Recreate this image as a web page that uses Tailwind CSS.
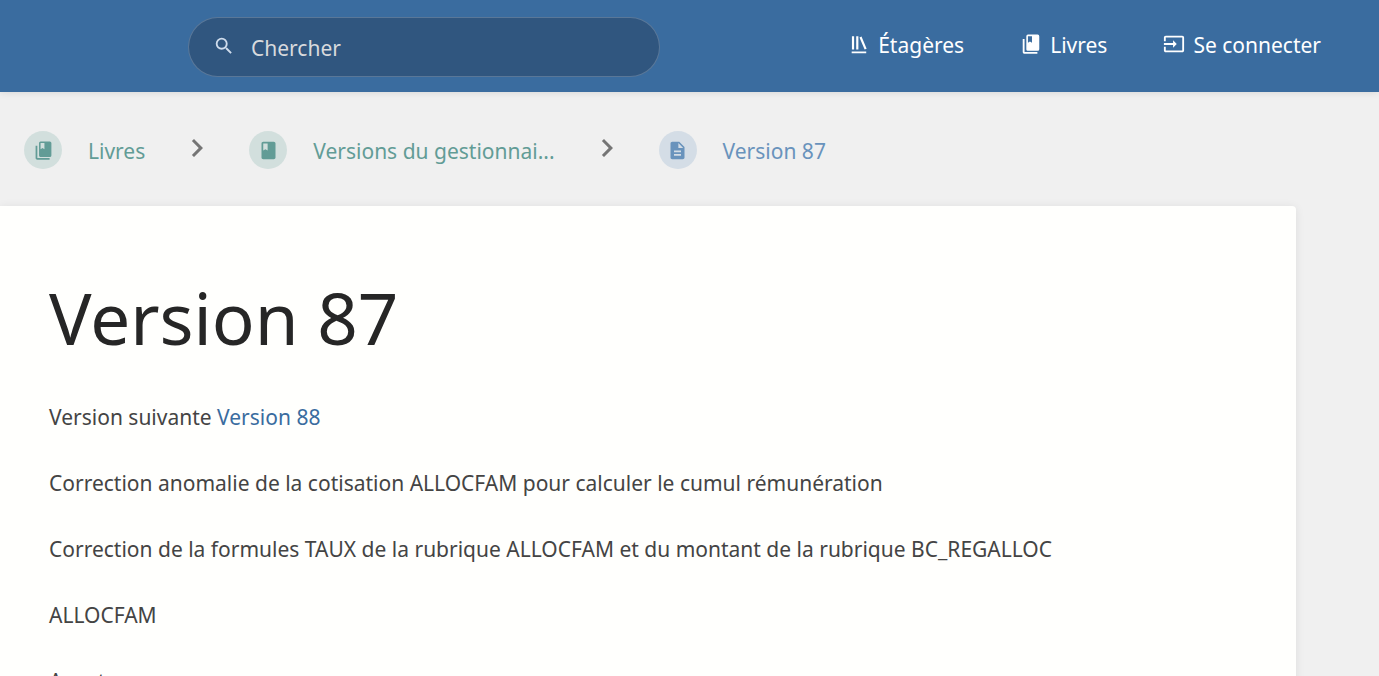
<!doctype html>
<html lang="fr">
<head>
    <meta charset="UTF-8">
    <meta name="viewport" content="width=device-width, initial-scale=1.0">
    <title>Version 87</title>
    <script src="https://cdn.jsdelivr.net/npm/@tailwindcss/browser@4"></script>
</head>

<body class="min-h-screen overflow-hidden bg-[#f0f0f0] font-['Segoe_UI','Noto_Sans',sans-serif] text-[21px] leading-8 text-[#444]">
    <header class="relative flex h-23 items-center justify-between bg-[#3a6c9f] pl-47 pr-[58px] text-white shadow-[0_0_8px_rgba(0,0,0,0.12)]">
        <form class="flex h-15 w-118 items-center gap-4 rounded-full border border-white/20 bg-[#30567f] pl-6 pr-8 mt-px">
            <button type="submit" aria-label="Chercher" class="mb-0.5 text-[#cfdcec]">
                <svg class="size-[22px]" viewBox="0 0 24 24" fill="currentColor"><path d="M15.5 14h-.79l-.28-.27A6.471 6.471 0 0 0 16 9.5 6.5 6.5 0 1 0 9.5 16c1.61 0 3.09-.59 4.23-1.57l.27.28v.79l5 4.99L20.49 19l-4.99-5zm-6 0C7.01 14 5 11.99 5 9.5S7.01 5 9.5 5 14 7.01 14 9.5 11.99 14 9.5 14z"/></svg>
            </button>
            <input type="text" name="term" aria-label="Chercher" placeholder="Chercher" class="min-w-0 flex-1 pt-0.5 outline-none placeholder:text-[#d8dadd]">
        </form>

        <nav class="flex items-center gap-14 pb-0.5">
            <a href="#" class="flex items-center gap-2">
                <svg class="mb-0.5 size-[22px]" viewBox="0 0 24 24" fill="currentColor"><path d="M4 20.058h15.892V22H4zM6.658 3.643V18h-2.38V3.643zM11.326 3.643V18H8.947V3.643zM14.722 3.856l5.613 13.214-2.19.93-5.613-13.214z"/></svg>
                <span>Étagères</span>
            </a>
            <a href="#" class="flex items-center gap-2">
                <svg class="mb-0.5 size-[22px]" viewBox="0 0 24 24" fill="currentColor"><path d="M19.252 1.708H8.663a1.77 1.77 0 0 0-1.765 1.764v14.12c0 .97.794 1.764 1.765 1.764h10.59a1.77 1.77 0 0 0 1.764-1.765V3.473a1.77 1.77 0 0 0-1.765-1.765zM8.663 3.473h4.412v7.06l-2.206-1.324-2.206 1.324z"/><path d="M2.966 6.61v14c0 1.1.9 2 2 2h14v-2h-14v-14z"/></svg>
                <span>Livres</span>
            </a>
            <a href="#" class="flex items-center gap-2">
                <svg class="mb-0.5 size-[22px]" viewBox="0 0 24 24" fill="currentColor"><path d="M21 3.01H3c-1.1 0-2 .9-2 2V9h2V4.99h18v14.03H3V15H1v4.01c0 1.1.9 1.98 2 1.98h18c1.1 0 2-.88 2-1.98v-14c0-1.11-.9-2-2-2zM11 16l4-4-4-4v3H1v2h10v3z"/></svg>
                <span>Se connecter</span>
            </a>
        </nav>
    </header>

    <nav aria-label="Fil d'Ariane" class="flex h-[114px] items-center gap-[34px] px-6 pt-0.5">
        <a href="#" class="flex items-center gap-[26px] text-[#629c96]">
            <span class="flex size-[38px] items-center justify-center rounded-full bg-[#d2dfdd]">
                <svg class="size-[21px]" viewBox="0 0 24 24" fill="currentColor"><path d="M19.252 1.708H8.663a1.77 1.77 0 0 0-1.765 1.764v14.12c0 .97.794 1.764 1.765 1.764h10.59a1.77 1.77 0 0 0 1.764-1.765V3.473a1.77 1.77 0 0 0-1.765-1.765zM8.663 3.473h4.412v7.06l-2.206-1.324-2.206 1.324z"/><path d="M2.966 6.61v14c0 1.1.9 2 2 2h14v-2h-14v-14z"/></svg>
            </span>
            <span class="pt-0.5">Livres</span>
        </a>
        <svg class="mb-1 size-9 text-[#757575]" viewBox="0 0 24 24" fill="currentColor"><path d="M10 6L8.59 7.41 13.17 12l-4.58 4.59L10 18l6-6z"/></svg>
        <a href="#" class="flex items-center gap-[26px] text-[#629c96]">
            <span class="flex size-[38px] items-center justify-center rounded-full bg-[#d2dfdd]">
                <svg class="size-[21px]" viewBox="0 0 24 24" fill="currentColor"><path d="M18 2H6c-1.1 0-2 .9-2 2v16c0 1.1.9 2 2 2h12c1.1 0 2-.9 2-2V4c0-1.1-.9-2-2-2zM6 4h5v8l-2.5-1.5L6 12V4z"/></svg>
            </span>
            <span class="pt-0.5">Versions du gestionnai...</span>
        </a>
        <svg class="mb-1 size-9 text-[#757575]" viewBox="0 0 24 24" fill="currentColor"><path d="M10 6L8.59 7.41 13.17 12l-4.58 4.59L10 18l6-6z"/></svg>
        <a href="#" class="flex items-center gap-[26px] text-[#6993bc]">
            <span class="flex size-[38px] items-center justify-center rounded-full bg-[#d4dde6]">
                <svg class="size-[21px]" viewBox="0 0 24 24" fill="currentColor"><path d="M14 2H6c-1.1 0-1.99.9-1.99 2L4 20c0 1.1.89 2 1.99 2H18c1.1 0 2-.9 2-2V8l-6-6zm2 16H8v-2h8v2zm0-4H8v-2h8v2zm-3-5V3.5L18.5 9H13z"/></svg>
            </span>
            <span class="pt-0.5">Version 87</span>
        </a>
    </nav>

    <main class="mr-[83px] rounded-tr bg-[#fffffd] px-[49px] pt-16 pb-16 shadow-[0_1px_10px_rgba(0,0,0,0.08)]">
        <h1 class="text-[71px] leading-24 text-[#262626]">Version 87</h1>
        <div class="mt-[35px] flex flex-col gap-[34px]">
            <p>Version suivante <a href="#" class="text-[#3a6c9f]">Version 88</a></p>
            <p>Correction anomalie de la cotisation ALLOCFAM pour calculer le cumul rémunération</p>
            <p>Correction de la formules TAUX de la rubrique ALLOCFAM et du montant de la rubrique BC_REGALLOC</p>
            <p>ALLOCFAM</p>
            <p>Avant</p>
        </div>
    </main>
</body>
</html>
